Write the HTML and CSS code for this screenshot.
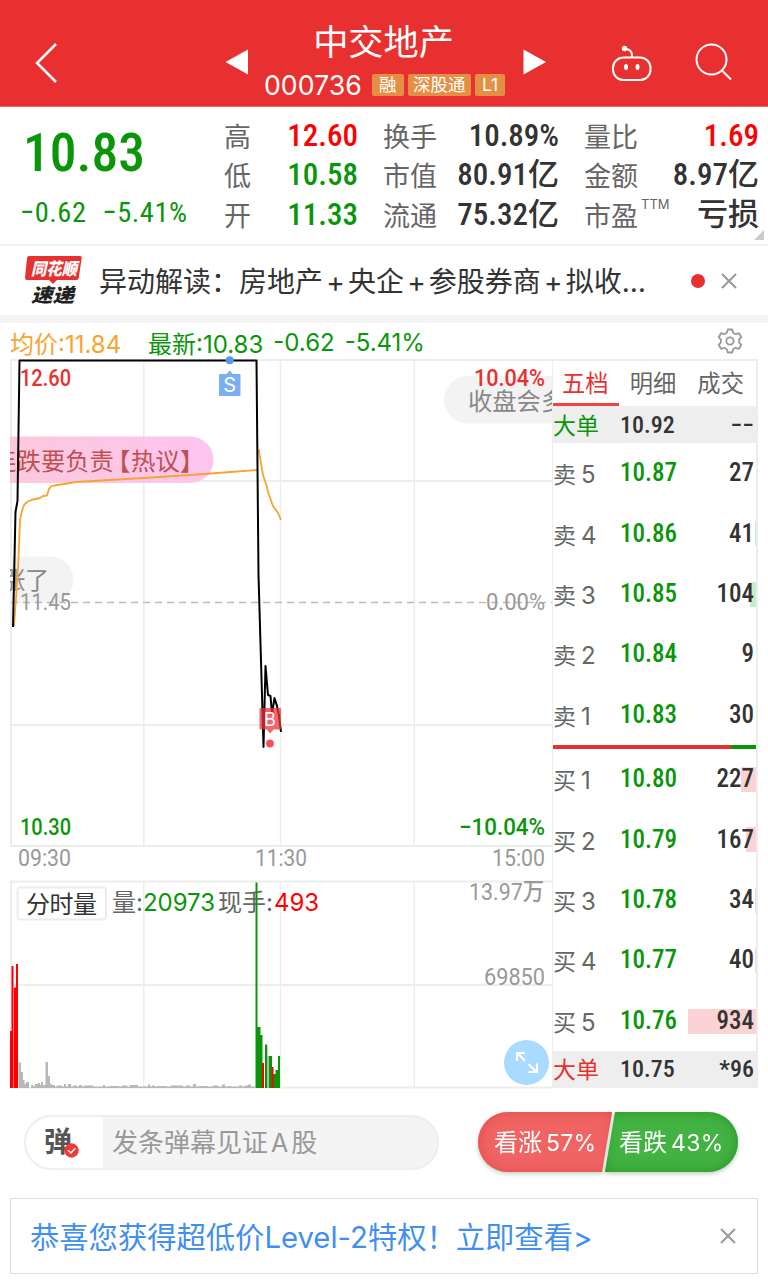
FILE: index.html
```html
<!DOCTYPE html>
<html lang="zh-CN">
<head>
    <meta charset="UTF-8">
    <meta name="viewport" content="width=device-width, initial-scale=1.0">
    <title>中交地产 000736</title>
    <link rel="stylesheet" href="styles.css">
</head>
<body>
    <header class="header">
        <svg class="back" width="24" height="42" viewBox="0 0 24 42"><path d="M22 2 3 21 22 40"/></svg>
        <svg class="prev" width="24" height="26" viewBox="0 0 24 26"><path d="M23 0.500V25.500L0.500 13z"/></svg>
        <div class="stock">
            <h1>中交地产</h1>
            <div class="code-row">
                <span class="code">000736</span>
                <span class="tag">融</span>
                <span class="tag wide">深股通</span>
                <span class="tag">L1</span>
            </div>
        </div>
        <svg class="next" width="24" height="26" viewBox="0 0 24 26"><path d="M0.500 0.500V25.500L23 13z"/></svg>
        <svg class="robot" width="42" height="38" viewBox="0 0 42 38">
            <rect x="2" y="12.500" width="37.500" height="22.500" rx="10.500"/>
            <path d="M21 12.500c.5-6-2-8.500-7-8.500"/>
            <circle class="dot" cx="13.500" cy="3.500" r="2.700"/>
            <ellipse class="dot" cx="15" cy="22" rx="2" ry="3"/>
            <ellipse class="dot" cx="26.500" cy="22" rx="2" ry="3"/>
        </svg>
        <svg class="search" width="38" height="38" viewBox="0 0 38 38"><circle cx="16.500" cy="16.500" r="15"/><path d="M26.500 27 36 36.500"/></svg>
    </header>

    <section class="quote">
        <div class="price">
            <div class="last num">10.83</div>
            <div class="change num"><span>−0.62</span><span>−5.41%</span></div>
        </div>
        <dl class="stats">
            <dt>高</dt><dd class="num up">12.60</dd>
            <dt>低</dt><dd class="num down">10.58</dd>
            <dt>开</dt><dd class="num down">11.33</dd>
        </dl>
        <dl class="stats mid">
            <dt>换手</dt><dd class="num">10.89%</dd>
            <dt>市值</dt><dd class="num">80.91亿</dd>
            <dt>流通</dt><dd class="num">75.32亿</dd>
        </dl>
        <dl class="stats last-col">
            <dt>量比</dt><dd class="num up">1.69</dd>
            <dt>金额</dt><dd class="num">8.97亿</dd>
            <dt>市盈<sup>TTM</sup></dt><dd class="num">亏损</dd>
        </dl>
        <i class="corner"></i>
    </section>

    <section class="news">
        <svg class="news-logo" width="60" height="50" viewBox="0 0 60 50">
            <path d="M5 0h51q2 0 1.700 2l-3 20q-.3 2-2.300 2H33l-4 4-4-4H3q-2.300 0-2-2L3 2q.3-2 2-2z"/>
            <text class="logo-top" x="7" y="18.500" textLength="46" lengthAdjust="spacingAndGlyphs">同花顺</text>
            <text class="logo-bottom" x="7" y="45.500" textLength="43" lengthAdjust="spacingAndGlyphs">速递</text>
        </svg>
        <p>异动解读：房地产<b>+</b>央企<b>+</b>参股券商<b>+</b>拟收…</p>
        <i class="red-dot"></i>
        <svg class="close" width="16" height="16" viewBox="0 0 16 16"><path d="M1 1l14 14M15 1 1 15"/></svg>
    </section>

    <section class="info">
        <span class="avg">均价:11.84</span>
        <span class="down">最新:10.83</span>
        <span class="down">-0.62</span>
        <span class="down">-5.41%</span>
        <svg class="gear" width="26" height="26" viewBox="0 0 26 26">
            <path d="M10.800 1.500h4.400l1 3.300 2.500 1.400 3.300-1 2.300 4-2.200 2.500v2.600l2.200 2.500-2.300 4-3.300-1-2.500 1.400-1 3.300h-4.400l-1-3.300-2.500-1.400-3.300 1-2.300-4 2.200-2.500v-2.600L1.700 9.200l2.300-4 3.300 1 2.500-1.400z"/>
            <circle cx="13" cy="13" r="3.700"/>
        </svg>
    </section>

    <main class="board">
        <svg class="chart" width="552" height="731" viewBox="0 359 552 731">
            <defs>
                <linearGradient id="pink"><stop offset="0" stop-color="#fbcbd6"/><stop offset="1" stop-color="#fdc4f0"/></linearGradient>
                <clipPath id="plot"><rect x="10" y="359" width="542" height="731"/></clipPath>
            </defs>

            <!-- grid -->
            <g class="grid">
                <path d="M10 360h542M10 481h542M10 725h542M10 846h542M10 881.500h542M10 985h542M10 1087.500h542M11 360v486M11 881v206"/>
                <path class="thin" d="M143.800 360v486M280.500 360v486M414.300 360v486M143.800 881v206M280.500 881v206M414.300 881v206"/>
            </g>

            <!-- bullet comments -->
            <g clip-path="url(#plot)" class="bullets">
                <rect x="-60" y="436.500" width="273.500" height="46.500" rx="23.200" fill="url(#pink)"/>
                <rect x="-60" y="556.500" width="133.500" height="46.500" rx="23.200"/>
                <rect x="444" y="376" width="200" height="47.500" rx="23.700"/>
                <text class="hot" x="-8 16.500 41 65.300 89.500 106 131 155.500 180" y="470">连跌要负责【热议】</text>
                <text x="1 25" y="589">涨了</text>
                <text x="468" y="409.500">收盘会多</text>
            </g>
            <path class="zero" d="M11 602.500H552"/>

            <!-- price labels -->
            <g class="axis">
                <text class="r" x="20" y="386" textLength="51" lengthAdjust="spacingAndGlyphs">12.60</text>
                <text class="r" x="474" y="386" textLength="71" lengthAdjust="spacingAndGlyphs">10.04%</text>
                <text x="20" y="610" textLength="51" lengthAdjust="spacingAndGlyphs">11.45</text>
                <text x="486" y="610" textLength="59" lengthAdjust="spacingAndGlyphs">0.00%</text>
                <text class="g" x="20" y="835" textLength="51" lengthAdjust="spacingAndGlyphs">10.30</text>
                <text class="g" x="459" y="835" textLength="86" lengthAdjust="spacingAndGlyphs">−10.04%</text>
                <text x="18" y="866" textLength="53" lengthAdjust="spacingAndGlyphs">09:30</text>
                <text x="255" y="866" textLength="52" lengthAdjust="spacingAndGlyphs">11:30</text>
                <text x="492" y="866" textLength="53" lengthAdjust="spacingAndGlyphs">15:00</text>
                <text x="469" y="900" textLength="75" lengthAdjust="spacingAndGlyphs">13.97万</text>
                <text x="484" y="984.500" textLength="61" lengthAdjust="spacingAndGlyphs">69850</text>
            </g>

            <polyline class="avg-line" points="14,626 18,570 20,520 22,511 24,505 27,502 31,500 40,498 43,496 47,495.500 49,489 51,486.500 54,485.500 64,484 76,482 110,480 143,478 190,475 205,474 230,472 257,470"/>
            <polyline class="avg-line" points="258.500,449 263,475 266,484 269,495 273,506 278,513 281,520"/>
            <polyline class="price-line" points="13,627 15.500,512 17.500,501 19.500,360.500 256.500,360.500 258.500,575 263.500,747 265.500,666 268,695 270.500,696 272,714 274.500,698 277,706 279,716 281,732"/>

            <!-- trade marks -->
            <g class="mark sell">
                <circle cx="229.700" cy="360.300" r="4"/>
                <path d="M220 374h6.500l3.200-3.500 3.200 3.500h6.600q1 0 1 1v20q0 1-1 1H220q-1 0-1-1v-20q0-1 1-1z"/>
                <text x="229.700" y="392">S</text>
            </g>
            <g class="mark buy">
                <path d="M260.500 708h19.500q1 0 1 1v19.500q0 1-1 1h-6.500l-3.400 4-3.400-4h-6.200q-1 0-1-1V709q0-1 1-1z"/>
                <circle cx="270" cy="743.500" r="3.900"/>
                <text x="270" y="726">B</text>
            </g>

            <!-- volume -->
            <rect class="vol-box" x="17.500" y="887.500" width="88.500" height="32" rx="3"/>
            <g class="vol-text">
                <text class="title" x="26" y="913" textLength="71">分时量</text>
                <text x="112" y="911">量:</text>
                <text class="down" x="143" y="911" textLength="72">20973</text>
                <text x="218" y="911">现手:</text>
                <text class="up" x="274" y="911" textLength="45">493</text>
            </g>
            <path class="bar-gray" d="M18.500 1088v-25.500h2.500v9.500h2v8h1.500v4h1.500v-2h3v6zM31 1088v-3h2v1h2v-2h3v-1h2v2h1v-3h2v3h2.500v-23h2.500v14h2v8h2v1h3v3z"/>
            <path class="bar-gray" d="M55 1088v-1.500h200v1.500zM57 1087v-1.500h5v1.500zM64 1087v-3h2v3zM68 1087v-3h3v3zM73 1087v-1.500h4v1.500zM79 1087v-2h3v2zM84 1087v-1.500h9v1.500zM103 1087v-2h2v2zM110 1087v-1h9v1zM122 1087v-1.500h5v1.500zM130 1087v-2h8v2zM148 1087v-2.500h2v2.500zM152 1087v-1.500h3v1.500zM157 1087v-1h9v1zM171 1087v-1.500h12v1.500zM186 1087v-1.500h4v1.500zM193 1087v-3h3v3zM199 1087v-1h9v1zM213 1087v-1.500h5v1.500zM222 1087v-2.500h3v2.500zM228 1087v-1h3v1zM239 1087v-1.500h3v1.500zM245 1087v-1.500h3v1.500zM248 1087v-2.500h3v2.500zM267.500 1088v-32h1.500v32z"/>
            <path class="bar-red" d="M10 1088v-57h1.500v-65h2v122zM14 1088v-100.500h2v-23.500h2v124z"/>
            <path class="bar-green" d="M255.500 1088V882.500h2V1027h3v8h2v53zM265 1088v-43.500h2.300V1088zM269 1088v-32h3v18h3.500v-4h2.500v-14h2v32z"/>
            <path class="bar-red" d="M262 1088v-25h2v25zM271.500 1088v-21h2v21z"/>

            <g class="expand">
                <circle cx="526.500" cy="1062.500" r="22.500"/>
                <path d="M517 1061v-8h8M518 1053.500l7 7.500M537 1063.500v8.500h-8.500M536 1071.500l-7.500-7.500"/>
            </g>
        </svg>

        <div class="book">
            <nav class="tabs"><a class="active">五档</a><a>明细</a><a>成交</a></nav>
            <div class="big-row"><span class="down">大单</span><b class="num">10.92</b><b class="num qty">−−</b></div>
            <div class="row"><span>卖<i>5</i></span><b class="num down">10.87</b><b class="num qty">27</b></div>
            <div class="row ask"><span>卖<i>4</i></span><b class="num down">10.86</b><b class="num qty">41</b><em style="width: 1px"></em></div>
            <div class="row ask"><span>卖<i>3</i></span><b class="num down">10.85</b><b class="num qty">104</b><em style="width: 6px"></em></div>
            <div class="row"><span>卖<i>2</i></span><b class="num down">10.84</b><b class="num qty">9</b></div>
            <div class="row"><span>卖<i>1</i></span><b class="num down">10.83</b><b class="num qty">30</b></div>
            <div class="ratio"><i style="width: 178px"></i></div>
            <div class="row"><span>买<i>1</i></span><b class="num down">10.80</b><b class="num qty">227</b><em style="width: 15px"></em></div>
            <div class="row"><span>买<i>2</i></span><b class="num down">10.79</b><b class="num qty">167</b><em style="width: 10px"></em></div>
            <div class="row"><span>买<i>3</i></span><b class="num down">10.78</b><b class="num qty">34</b><em style="width: 1px"></em></div>
            <div class="row"><span>买<i>4</i></span><b class="num down">10.77</b><b class="num qty">40</b><em style="width: 1px"></em></div>
            <div class="row"><span>买<i>5</i></span><b class="num down">10.76</b><b class="num qty">934</b><em style="width: 68px"></em></div>
            <div class="big-row"><span class="red">大单</span><b class="num">10.75</b><b class="num qty">*96</b></div>
        </div>
    </main>

    <section class="actions">
        <div class="danmu">
            <div class="danmu-switch">
                <b>弹</b>
                <svg width="15" height="15" viewBox="0 0 15 15"><circle cx="7.500" cy="7.500" r="7.200"/><path d="M4 7.300 6.800 10l4.500-4.700"/></svg>
            </div>
            <div class="danmu-input">发条弹幕见证<i>A</i>股</div>
        </div>
        <div class="vote">
            <div class="bull">看涨<i>57%</i></div>
            <div class="bear">看跌<i>43%</i></div>
        </div>
    </section>

    <section class="promo">
        <p>恭喜您获得超低价<i>Level-2</i>特权！立即查看<i>&gt;</i></p>
        <svg class="close" width="16" height="16" viewBox="0 0 16 16"><path d="M1 1l14 14M15 1 1 15"/></svg>
    </section>
</body>
</html>
```
FILE: styles.css
```css
* {
    box-sizing: border-box;
}

body {
    margin: 0;
    width: 768px;
    height: 1285px;
    overflow: hidden;
    background: #fff;
    color: #333;
    font-family: Inter, "Noto Sans CJK SC", sans-serif;
    font-weight: 400;
}

h1, p, dl, dd {
    margin: 0;
}

i, em {
    font-style: normal;
}

.num {
    font-family: Roboto, "Noto Sans CJK SC", sans-serif;
    font-weight: 500;
    font-stretch: 87%;
}

.up {
    color: #f00;
    fill: #f00;
}

.down {
    color: #0a960a;
    fill: #0a960a;
}

.red {
    color: #e93030;
}

/* header */
.header {
    display: flex;
    align-items: flex-start;
    height: 107px;
    background: #e93030;
    color: #fff;
    border-bottom: 1px solid #ee6a6a;
}

.header svg {
    flex: none;
    fill: none;
    stroke: #fff;
    stroke-width: 2;
}

.header .back {
    margin: 42px 0 0 34px;
    stroke-width: 2.5;
}

.header .prev, .header .next, .header .dot {
    fill: #fff;
    stroke: none;
}

.header .prev {
    margin: 49px 0 0 167px;
}

.stock {
    width: 242px;
    margin-left: 15px;
    padding-top: 17px;
}

h1 {
    margin-left: -3px;
    font-size: 35.200px;
    font-weight: 400;
    line-height: 50px;
    text-align: center;
}

.code-row {
    display: flex;
    align-items: center;
    gap: 4.500px;
    margin-top: 1px;
    height: 34px;
}

.code {
    width: 103.500px;
    font-size: 26.700px;
}

.tag {
    padding: 0 7px;
    border-radius: 2px;
    background: #e58f45;
    font-size: 17.500px;
    line-height: 22px;
    white-space: nowrap;
}

.tag.wide {
    padding: 0 5px;
}

.header .next {
    margin: 49px 0 0 17px;
}

.header .robot {
    margin: 45px 0 0 64px;
}

.header .search {
    margin: 43px 0 0 42px;
}

/* quote */
.quote {
    position: relative;
    display: flex;
    height: 139px;
    border-bottom: 2px solid #f1f1f1;
}

.price {
    width: 224px;
    color: #0a960a;
}

.last {
    padding: 16px 0 0 23px;
    font-size: 53.500px;
    line-height: 60px;
}

.change {
    display: flex;
    gap: 16px;
    padding: 15px 0 0 20px;
    font-size: 28.500px;
    font-weight: 450;
    line-height: 30px;
    letter-spacing: 0.500px;
}

.stats {
    display: grid;
    grid-template-columns: auto 1fr;
    grid-auto-rows: 39.300px;
    width: 134px;
    padding-top: 9px;
    line-height: 39px;
}

.stats.mid {
    width: 176px;
    margin-left: 25px;
}

.stats.last-col {
    width: 175px;
    margin-left: 25px;
}

.stats dt {
    padding-top: 2px;
    color: #666;
    font-size: 27px;
    white-space: nowrap;
}

.stats dd {
    font-size: 31px;
    text-align: right;
    white-space: nowrap;
}

.stats sup {
    margin-left: 3px;
    font-size: 13px;
    line-height: 0;
    vertical-align: 17px;
}

.corner {
    position: absolute;
    right: 4px;
    bottom: 4px;
    border-left: 10px solid transparent;
    border-bottom: 10px solid #ccc;
}

/* news */
.news {
    display: flex;
    align-items: center;
    height: 77px;
    padding: 0 31px 0 24px;
    border-bottom: 8px solid #f4f4f4;
}

.news-logo {
    flex: none;
}

.news-logo path {
    fill: #e93030;
}

.news-logo text {
    font-size: 17px;
    font-weight: 900;
    font-style: italic;
}

.news-logo .logo-top {
    fill: #fff;
}

.news-logo .logo-bottom {
    fill: #222;
    font-size: 19px;
}

.news p {
    width: 607px;
    padding: 0 0 2px 15px;
    font-size: 28px;
    white-space: nowrap;
}

.news b {
    padding: 0 3.200px;
    font-weight: 400;
}

.red-dot {
    width: 14px;
    height: 14px;
    margin-right: 16px;
    border-radius: 50%;
    background: #e93030;
}

.close {
    flex: none;
    fill: none;
    stroke: #999;
    stroke-width: 2;
}

/* chart header */
.info {
    display: flex;
    align-items: center;
    height: 36px;
    padding: 2px 25px 0 10px;
    font-size: 24px;
    white-space: nowrap;
}

.info .avg {
    width: 138px;
    color: #f7a530;
}

.info .down {
    margin-right: 10px;
}

.gear {
    margin: -3px 0 0 auto;
    fill: none;
    stroke: #999;
    stroke-width: 1.800;
    stroke-linejoin: round;
}

.board {
    display: flex;
    height: 731px;
}

.chart {
    flex: none;
    overflow: visible;
}

.grid path {
    fill: none;
    stroke: #ededed;
    stroke-width: 2;
}

.grid .thin {
    stroke-width: 1.500;
}

.zero {
    stroke: #bbb;
    stroke-width: 1.300;
    stroke-dasharray: 7 5;
}

.bullets rect {
    fill: #f3f3f3;
}

.bullets rect:first-child {
    fill: url(#pink);
}

.bullets text {
    fill: #888;
    font-size: 24.300px;
}

.bullets .hot {
    fill: #c0504f;
}

.axis text {
    fill: #999;
    font-family: Roboto, "Noto Sans CJK SC", sans-serif;
    font-size: 24px;
    font-weight: 450;
}

.axis .r {
    fill: #e93030;
    font-weight: 500;
}

.axis .g {
    fill: #0a960a;
    font-weight: 500;
}

.avg-line, .price-line {
    fill: none;
    stroke: #f7a530;
    stroke-width: 1.800;
    stroke-linejoin: round;
}

.price-line {
    stroke: #000;
    stroke-width: 2;
}

.mark {
    text-anchor: middle;
    font-size: 20px;
}

.mark text {
    fill: #fff;
}

.sell circle {
    fill: #5896e8;
}

.sell path {
    fill: #7baff5;
}

.buy {
    fill: #f05458;
}

.buy path {
    fill: #eb3439;
    fill-opacity: 0.750;
}

.buy text {
    font-size: 18px;
}

.vol-box {
    fill: #fff;
    stroke: #ececec;
    stroke-width: 2;
}

.vol-text {
    fill: #666;
    font-size: 24px;
}

.vol-text .title {
    fill: #333;
}

.bar-gray {
    fill: #b8b8b8;
}

.bar-red {
    fill: #f00;
}

.bar-green {
    fill: #0a960a;
}

.expand circle {
    fill: #a9daff;
}

.expand path {
    fill: none;
    stroke: #fff;
    stroke-width: 2.200;
}

/* order book */
.book {
    width: 206px;
    height: 729px;
    border: 2px solid #ededed;
    border-left-width: 1px;
}

.tabs {
    display: flex;
    height: 45px;
    color: #666;
    font-size: 23.300px;
    line-height: 45px;
}

.tabs a {
    width: 69px;
    padding-left: 9px;
}

.tabs .active {
    width: 67px;
    margin-right: 2px;
    color: #e93030;
    border-bottom: 3px solid #f04540;
}

.big-row, .row {
    position: relative;
    display: flex;
    align-items: center;
    height: 37px;
    background: #eee;
    font-size: 23px;
}

.row {
    height: 60.400px;
    background: #fff;
    color: #666;
}

.big-row span, .row span {
    position: relative;
    width: 67px;
    white-space: nowrap;
}

.big-row span {
    padding-bottom: 2px;
}

.row span i {
    margin-left: 5px;
    font-size: 24px;
}

.book .num {
    position: relative;
    z-index: 1;
    padding-bottom: 1px;
    font-size: 25px;
}

.book .big-row .num {
    padding-bottom: 0;
    font-size: 24px;
    color: #333;
}

.book .qty {
    margin-left: auto;
    padding-right: 2px;
    color: #333;
}

.row em {
    position: absolute;
    right: 0;
    top: 18px;
    height: 25px;
    background: #fbd3d5;
}

.row.ask em {
    background: #c9ecc9;
}

.ratio {
    height: 4px;
    background: #0a960a;
}

.ratio i {
    display: block;
    height: 4px;
    background: #e93030;
}

/* bottom bar */
.actions {
    display: flex;
    justify-content: space-between;
    height: 107px;
    padding: 22px 30px 0 24px;
}

.danmu {
    display: flex;
    width: 415px;
    height: 55px;
    margin-top: 3px;
    border: 2px solid #eee;
    border-radius: 28px;
    background: #f4f4f4;
    overflow: hidden;
}

.danmu-switch {
    display: flex;
    width: 77px;
    padding-left: 18px;
    background: #fff;
    line-height: 51px;
}

.danmu-switch b {
    color: #555;
    font-size: 28px;
    font-weight: 700;
}

.danmu-switch svg {
    margin: 26px 0 0 -8px;
    fill: #f03b34;
    stroke: #fff;
    stroke-width: 1.500;
}

.danmu-switch circle {
    stroke: none;
}

.danmu-input {
    padding-left: 9px;
    color: #999;
    font-size: 26px;
    line-height: 52px;
}

.danmu-input i {
    padding: 0 3px;
    font-size: 25px;
}

.vote {
    display: flex;
    width: 260px;
    color: #fff;
    font-size: 24px;
    line-height: 62px;
    filter: drop-shadow(0 2px 2px rgba(80, 120, 80, 0.350));
}

.bull, .bear {
    height: 60px;
    white-space: nowrap;
    background: #f06464;
    box-shadow: inset 0 0 12px #e24a4a;
}

.bull {
    width: 134px;
    padding-left: 16px;
    border-radius: 30px 0 0 30px;
    clip-path: polygon(0 0, 100% 0, 124px 100%, 0 100%);
}

.bear {
    width: 133px;
    margin-left: -7px;
    padding-left: 14px;
    border-radius: 0 30px 30px 0;
    background: #42b242;
    box-shadow: inset 0 0 12px #269626;
    clip-path: polygon(10px 0, 100% 0, 100% 100%, 0 100%);
}

.vote i {
    margin-left: 4px;
    font-size: 23px;
    letter-spacing: 0.300px;
}

.promo {
    display: flex;
    align-items: center;
    justify-content: space-between;
    width: 748px;
    height: 76px;
    margin: 1px 10px 0;
    padding: 0 21px 0 19px;
    border: 1px solid #ddd;
    color: #3f8ff0;
    font-size: 29.300px;
}

.promo p {
    padding-bottom: 3px;
}
```
